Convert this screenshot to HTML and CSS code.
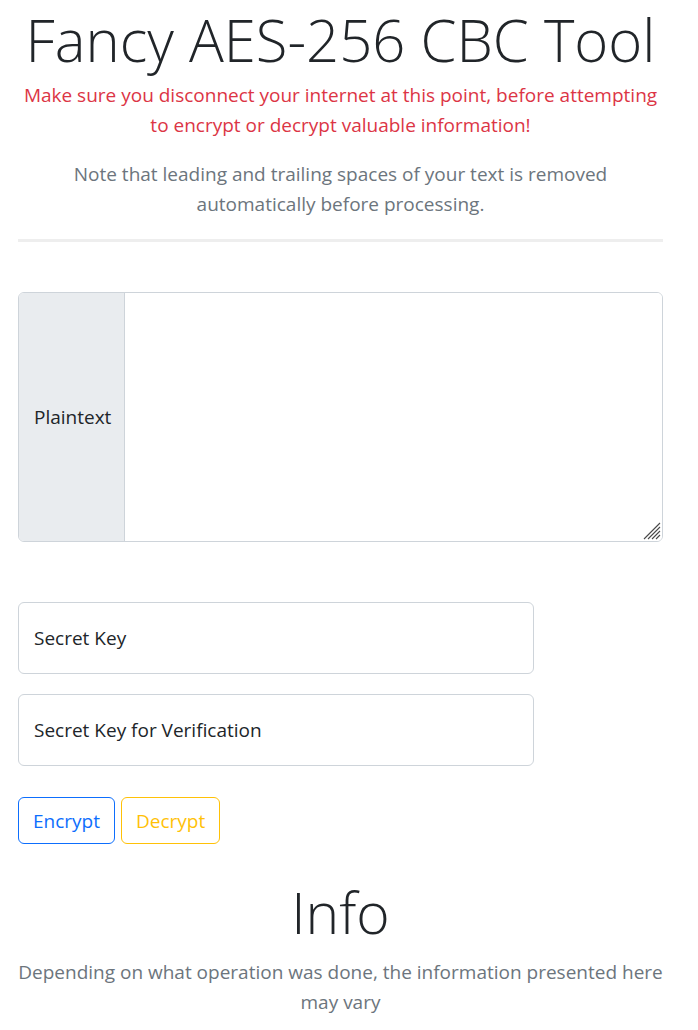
FILE: index.html
```html
<!DOCTYPE html>
<html lang="en">
<head>
<meta charset="utf-8">
<title>Fancy AES-256 CBC Tool</title>
<link rel="stylesheet" href="styles.css">
</head>
<body>
<main class="page">
  <header class="intro">
    <h1 class="display-title">Fancy AES-256 CBC Tool</h1>
    <p class="lead lead-danger">Make sure you disconnect your internet at this point, before attempting to encrypt or decrypt valuable information!</p>
    <p class="lead lead-muted">Note that leading and trailing spaces of your text is removed automatically before processing.</p>
  </header>
  <hr class="divider">
  <div class="input-group">
    <span class="input-group-text">Plaintext</span>
    <textarea class="form-control textarea" aria-label="Plaintext"></textarea>
    <svg class="resize-handle" width="18" height="18" viewBox="0 0 18 18" aria-hidden="true">
      <path d="M1 17 L17 1 M5 17 L17 5 M9 17 L17 9 M13 17 L17 13" stroke="#4a4a4a" stroke-width="1.1" fill="none"/>
    </svg>
  </div>
  <div class="keys">
    <div class="form-floating"><span class="floating-label">Secret Key</span></div>
    <div class="form-floating"><span class="floating-label">Secret Key for Verification</span></div>
  </div>
  <div class="actions">
    <button class="btn btn-outline-primary" type="button">Encrypt</button>
    <button class="btn btn-outline-warning" type="button">Decrypt</button>
  </div>
  <section class="info">
    <h2 class="display-info">Info</h2>
    <p class="lead lead-muted">Depending on what operation was done, the information presented here may vary</p>
  </section>
</main>
</body>
</html>
```
FILE: styles.css
```css
html, body {
  margin: 0;
  padding: 0;
  background: #fff;
}
body {
  font-family: "Open Sans", "Noto Sans", sans-serif;
  color: #212529;
  font-size: 19px;
  line-height: 1.5;
}
.page {
  width: 645px;
  margin-left: 18px;
  padding-top: 3px;
}
.intro {
  text-align: center;
}
.display-title {
  margin: 0;
  font-weight: 300;
  font-size: 58px;
  line-height: 74px;
  white-space: nowrap;
}
.lead {
  font-size: 19px;
  line-height: 30px;
  margin: 0;
}
.lead-danger {
  color: #dc3545;
  margin-top: 3px;
}
.lead-muted {
  color: #6c757d;
}
.intro .lead-muted {
  margin-top: 19px;
}
.divider {
  margin: 20px 0 0;
  border: 0;
  border-top: 3px solid #eeeeee;
  height: 0;
}
.input-group {
  position: relative;
  display: flex;
  margin-top: 50px;
  height: 250px;
  border: 1px solid #ced4da;
  border-radius: 6px;
  overflow: hidden;
  box-sizing: border-box;
}
.input-group-text {
  display: flex;
  align-items: center;
  width: 106px;
  box-sizing: border-box;
  padding: 0 15px;
  background: #e9ecef;
  border-right: 1px solid #ced4da;
  font-size: 19px;
}
.textarea {
  flex: 1;
  border: 0;
  margin: 0;
  padding: 6px 12px;
  resize: none;
  font: inherit;
  outline: none;
}
.resize-handle {
  position: absolute;
  right: 1px;
  bottom: 1px;
  pointer-events: none;
}
.keys {
  display: flex;
  flex-direction: column;
  gap: 20px;
  margin-top: 60px;
  width: 516px;
}
.form-floating {
  height: 72px;
  box-sizing: border-box;
  border: 1px solid #ced4da;
  border-radius: 6px;
  display: flex;
  align-items: center;
  padding: 0 15px;
}
.floating-label {
  font-size: 19px;
  color: #212529;
}
.actions {
  display: flex;
  gap: 6px;
  margin-top: 31px;
}
.btn {
  font-family: inherit;
  font-size: 19px;
  line-height: 29px;
  padding: 9px 14px 7px;
  background: #fff;
  border-radius: 6px;
  border: 1px solid;
  cursor: pointer;
}
.btn-outline-primary {
  color: #0d6efd;
  border-color: #0d6efd;
}
.btn-outline-warning {
  color: #ffc107;
  border-color: #ffc107;
}
.info {
  text-align: center;
  margin-top: 33px;
}
.display-info {
  margin: 0;
  font-weight: 300;
  font-size: 57px;
  line-height: 70px;
}
.info .lead-muted {
  margin-top: 10px;
}
```
